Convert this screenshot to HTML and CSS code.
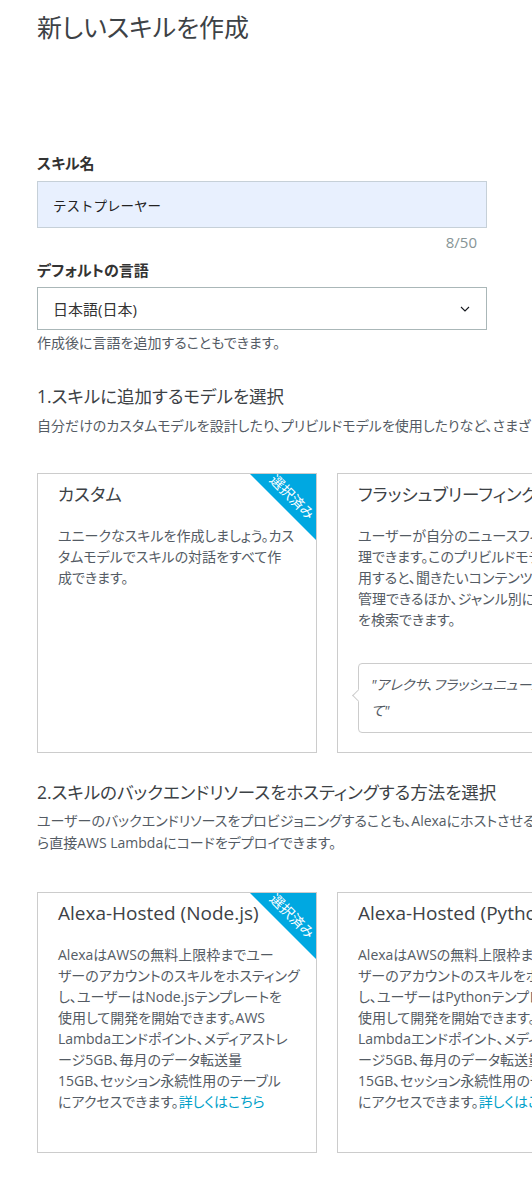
FILE: index.html
```html
<!DOCTYPE html>
<html lang="ja">
<head>
    <meta charset="UTF-8">
    <meta name="viewport" content="width=device-width, initial-scale=1.0">
    <title>新しいスキルを作成</title>
    <link rel="stylesheet" href="styles.css">
</head>
<body>
    <div class="page">
        <h1 class="page-title">新しいスキルを作成</h1>

        <!-- スキル名 -->
        <div class="field field-name">
            <label class="field-label" for="skillName">スキル名</label>
            <input class="text-input" type="text" id="skillName" value="テストプレーヤー">
            <div class="counter">8/50</div>
        </div>

        <!-- 言語 -->
        <div class="field field-lang">
            <label class="field-label" for="locale">デフォルトの言語</label>
            <div class="select-box" id="locale">
                <span>日本語(日本)</span>
                <svg class="chevron" width="10" height="6" viewBox="0 0 10 6">
                    <polyline points="1,1 5,5 9,1" fill="none" stroke="#16191f" stroke-width="1.1"/>
                </svg>
            </div>
            <div class="hint">作成後に言語を追加することもできます。</div>
        </div>

        <!-- 1. モデル -->
        <h2 class="section-title">1.スキルに追加するモデルを選択</h2>
        <p class="section-desc">自分だけのカスタムモデルを設計したり、プリビルドモデルを使用したりなど、さまざまな方法でスキルを作成できます。</p>

        <div class="card-row">
            <div class="card selected">
                <div class="ribbon"><span>選択済み</span></div>
                <h3 class="card-title">カスタム</h3>
                <p class="card-text">ユニークなスキルを作成しましょう。カス<br>タムモデルでスキルの対話をすべて作<br>成できます。</p>
            </div>
            <div class="card">
                <h3 class="card-title">フラッシュブリーフィング</h3>
                <p class="card-text">ユーザーが自分のニュースフィードを管<br>理できます。このプリビルドモデルを使<br>用すると、聞きたいコンテンツを一元<br>管理できるほか、ジャンル別にニュース<br>を検索できます。</p>
                <div class="bubble">"アレクサ、フラッシュニュースを教え<br>て"</div>
            </div>
            <div class="card">
                <h3 class="card-title">スマートホーム</h3>
                <p class="card-text">照明やサーモスタットなどのスマートホ<br>ームデバイスを操作するスキルを作成で<br>きます。</p>
            </div>
        </div>

        <!-- 2. ホスティング -->
        <h2 class="section-title section-title-2">2.スキルのバックエンドリソースをホスティングする方法を選択</h2>
        <p class="section-desc section-desc-2">ユーザーのバックエンドリソースをプロビジョニングすることも、Alexaにホストさせることもできます。Alexa-Hostedスキルでは、コードエディタか<br>ら直接AWS Lambdaにコードをデプロイできます。</p>

        <div class="card-row card-row-2">
            <div class="card card-hosting selected">
                <div class="ribbon"><span>選択済み</span></div>
                <h3 class="card-title">Alexa-Hosted (Node.js)</h3>
                <p class="card-text">AlexaはAWSの無料上限枠までユー<br>ザーのアカウントのスキルをホスティング<br>し、ユーザーはNode.jsテンプレートを<br>使用して開発を開始できます。AWS<br>Lambdaエンドポイント、メディアストレ<br>ージ5GB、毎月のデータ転送量<br>15GB、セッション永続性用のテーブル<br>にアクセスできます。<a class="link" href="#">詳しくはこちら</a></p>
            </div>
            <div class="card card-hosting">
                <h3 class="card-title">Alexa-Hosted (Python)</h3>
                <p class="card-text">AlexaはAWSの無料上限枠までユー<br>ザーのアカウントのスキルをホスティング<br>し、ユーザーはPythonテンプレートを<br>使用して開発を開始できます。AWS<br>Lambdaエンドポイント、メディアストレ<br>ージ5GB、毎月のデータ転送量<br>15GB、セッション永続性用のテーブル<br>にアクセスできます。<a class="link" href="#">詳しくはこちら</a></p>
            </div>
            <div class="card card-hosting">
                <h3 class="card-title">ユーザー定義のプロビジョニング</h3>
                <p class="card-text">ユーザーは自分でバックエンドリソースを<br>プロビジョニングし、管理できます。</p>
            </div>
        </div>
    </div>
</body>
</html>
```

FILE: styles.css
```css
/* 全体 */
html,
body {
    overflow: hidden;
}

body {
    margin: 0;
    padding: 0;
    background-color: #ffffff;
    font-family: 'Open Sans', 'Noto Sans CJK JP', sans-serif;
    font-feature-settings: "palt";
    color: #444444;
}

.page {
    padding: 11px 0 0 37px;
    width: 1000px;
}

.page-title {
    margin: 0;
    font-size: 25px;
    font-weight: 400;
    line-height: 32px;
    color: #3d4246;
}

/* フォーム */
.field {
    width: 450px;
}

.field-name {
    margin-top: 110px;
}

.field-lang {
    margin-top: 8px;
}

.field-label {
    display: block;
    font-size: 15px;
    font-weight: 700;
    line-height: 20px;
    color: #333333;
}

.text-input {
    display: block;
    box-sizing: border-box;
    width: 100%;
    height: 47px;
    margin-top: 8px;
    padding: 0 15px;
    border: 1px solid #c6d0d8;
    background-color: #e8f0fe;
    font-family: inherit;
    font-size: 13.5px;
    color: #222222;
    outline: none;
}

.counter {
    margin-top: 4px;
    padding-right: 10px;
    text-align: right;
    font-size: 15px;
    line-height: 20px;
    color: #879596;
}

.select-box {
    box-sizing: border-box;
    height: 43px;
    margin-top: 7px;
    padding: 0 16px 0 15px;
    border: 1px solid #aab7b8;
    display: flex;
    align-items: center;
    justify-content: space-between;
    font-size: 15px;
    color: #333333;
}

.hint {
    margin-top: 4px;
    font-size: 14px;
    line-height: 18px;
    color: #545b64;
}

/* セクション */
.section-title {
    margin: 31px 0 0;
    font-size: 17.5px;
    font-weight: 400;
    line-height: 26px;
    color: #3d4246;
}

.section-title-2 {
    margin-top: 26px;
}

.section-desc {
    margin: 6px 0 0;
    font-size: 14px;
    line-height: 22px;
    color: #545b64;
    white-space: nowrap;
}

.section-desc-2 {
    margin-top: 5px;
}

/* カード */
.card-row {
    display: grid;
    grid-template-columns: repeat(3, 280px);
    gap: 20px;
    margin-top: 36px;
}

.card-row-2 {
    margin-top: 38px;
}

.card {
    position: relative;
    box-sizing: border-box;
    border: 1px solid #cccccc;
    padding: 8px 19px 19px 20px;
    background-color: #ffffff;
}

.card-hosting {
    padding-bottom: 40px;
}

.card-title {
    margin: 0;
    font-size: 17.5px;
    font-weight: 400;
    line-height: 24px;
    color: #3d4246;
    white-space: nowrap;
}

.card-hosting .card-title {
    font-size: 19px;
}

.card-text {
    margin: 19px 0 0;
    font-size: 14px;
    line-height: 21px;
    color: #545b64;
    white-space: nowrap;
}

.link {
    color: #00a1c9;
    text-decoration: none;
}

/* 選択済みリボン */
.ribbon {
    position: absolute;
    top: 0;
    right: 0;
    width: 66px;
    height: 66px;
    background-color: #00a8e1;
    clip-path: polygon(0 0, 100% 0, 100% 100%);
}

.ribbon span {
    position: absolute;
    left: 42px;
    top: 23px;
    transform: translate(-50%, -50%) rotate(45deg);
    font-size: 14px;
    line-height: 16px;
    color: #ffffff;
    white-space: nowrap;
}

/* 発話例の吹き出し */
.bubble {
    position: relative;
    margin-top: 33px;
    padding: 8px 12px;
    border: 1px solid #cccccc;
    border-radius: 4px;
    font-size: 14px;
    font-style: italic;
    line-height: 26px;
    color: #545b64;
    white-space: nowrap;
}

.bubble::before {
    content: '';
    position: absolute;
    left: -5px;
    top: 27px;
    width: 8px;
    height: 8px;
    background-color: #ffffff;
    border-left: 1px solid #cccccc;
    border-bottom: 1px solid #cccccc;
    transform: rotate(45deg);
}
```
